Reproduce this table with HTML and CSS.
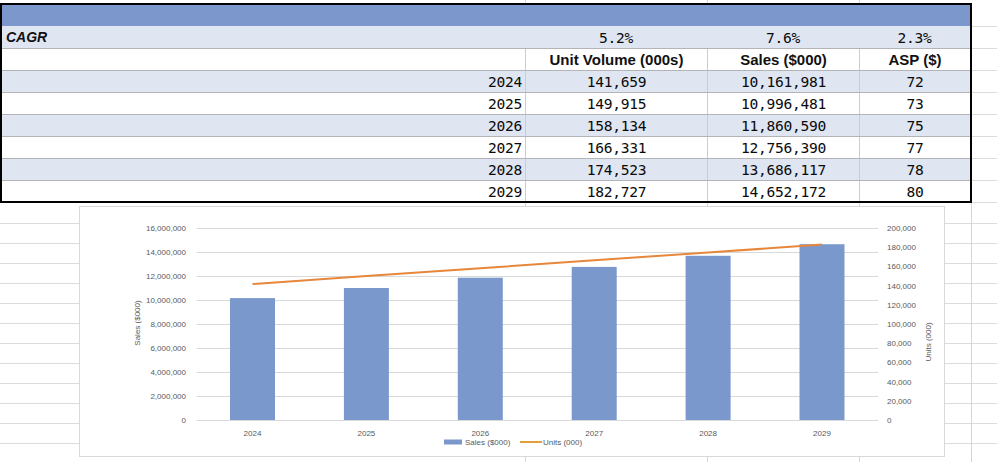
FILE: index.html
```html
<!DOCTYPE html>
<html>
<head>
<meta charset="utf-8">
<title>CAGR</title>
<link rel="stylesheet" href="styles.css">
</head>
<body>
<div class="sheet">
  <section class="top">
    <div class="xtable">
      <div class="row band"></div>
      <div class="row cagr alt">
        <div class="cell label">CAGR</div>
        <div class="cell num">5.2%</div>
        <div class="cell num">7.6%</div>
        <div class="cell num">2.3%</div>
      </div>
      <div class="row lined">
        <div class="cell"></div>
        <div class="cell head">Unit Volume (000s)</div>
        <div class="cell head">Sales ($000)</div>
        <div class="cell head">ASP ($)</div>
      </div>
      <div class="row lined alt">
        <div class="cell num year">2024</div>
        <div class="cell num">141,659</div>
        <div class="cell num">10,161,981</div>
        <div class="cell num">72</div>
      </div>
      <div class="row lined">
        <div class="cell num year">2025</div>
        <div class="cell num">149,915</div>
        <div class="cell num">10,996,481</div>
        <div class="cell num">73</div>
      </div>
      <div class="row lined alt">
        <div class="cell num year">2026</div>
        <div class="cell num">158,134</div>
        <div class="cell num">11,860,590</div>
        <div class="cell num">75</div>
      </div>
      <div class="row lined">
        <div class="cell num year">2027</div>
        <div class="cell num">166,331</div>
        <div class="cell num">12,756,390</div>
        <div class="cell num">77</div>
      </div>
      <div class="row lined alt">
        <div class="cell num year">2028</div>
        <div class="cell num">174,523</div>
        <div class="cell num">13,686,117</div>
        <div class="cell num">78</div>
      </div>
      <div class="row lined last">
        <div class="cell num year">2029</div>
        <div class="cell num">182,727</div>
        <div class="cell num">14,652,172</div>
        <div class="cell num">80</div>
      </div>
    </div>
  </section>
  <section class="bottom">
    <div class="chart">
      <svg class="plot" width="864" height="249" viewBox="80 207 864 249" xmlns="http://www.w3.org/2000/svg">
        <g class="grid">
          <line x1="197" x2="878" y1="228.5" y2="228.5"/>
          <line x1="197" x2="878" y1="252.5" y2="252.5"/>
          <line x1="197" x2="878" y1="276.5" y2="276.5"/>
          <line x1="197" x2="878" y1="300.5" y2="300.5"/>
          <line x1="197" x2="878" y1="324.5" y2="324.5"/>
          <line x1="197" x2="878" y1="348.5" y2="348.5"/>
          <line x1="197" x2="878" y1="372.5" y2="372.5"/>
          <line x1="197" x2="878" y1="396.5" y2="396.5"/>
          <line x1="197" x2="878" y1="420.5" y2="420.5"/>
        </g>
        <g class="ylab left">
          <text x="186" y="231">16,000,000</text>
          <text x="186" y="255">14,000,000</text>
          <text x="186" y="279">12,000,000</text>
          <text x="186" y="303">10,000,000</text>
          <text x="186" y="327">8,000,000</text>
          <text x="186" y="351">6,000,000</text>
          <text x="186" y="375">4,000,000</text>
          <text x="186" y="399">2,000,000</text>
          <text x="186" y="423">0</text>
        </g>
        <g class="ylab right">
          <text x="887" y="231">200,000</text>
          <text x="887" y="250.2">180,000</text>
          <text x="887" y="269.4">160,000</text>
          <text x="887" y="288.6">140,000</text>
          <text x="887" y="307.8">120,000</text>
          <text x="887" y="327">100,000</text>
          <text x="887" y="346.2">80,000</text>
          <text x="887" y="365.4">60,000</text>
          <text x="887" y="384.6">40,000</text>
          <text x="887" y="403.8">20,000</text>
          <text x="887" y="423">0</text>
        </g>
        <text class="atitle" transform="translate(140 323) rotate(-90)">Sales ($000)</text>
        <text class="atitle" transform="translate(931 342) rotate(-90)">Units (000)</text>
        <g class="bars">
          <rect x="230" y="298.1" width="45" height="121.9"/>
          <rect x="343.9" y="288" width="45" height="132"/>
          <rect x="457.8" y="277.7" width="45" height="142.3"/>
          <rect x="571.7" y="266.9" width="45" height="153.1"/>
          <rect x="685.6" y="255.8" width="45" height="164.2"/>
          <rect x="799.5" y="244.2" width="45" height="175.8"/>
        </g>
        <polyline class="units" points="252.5,284 366.4,276.1 480.3,268.2 594.2,260.3 708.1,252.5 822,244.6"/>
        <g class="xlab">
          <text x="252.5" y="436">2024</text>
          <text x="366.4" y="436">2025</text>
          <text x="480.3" y="436">2026</text>
          <text x="594.2" y="436">2027</text>
          <text x="708.1" y="436">2028</text>
          <text x="822" y="436">2029</text>
        </g>
        <g class="legend">
          <rect x="444" y="439.5" width="18" height="5"/>
          <text x="465" y="445">Sales ($000)</text>
          <line x1="520" x2="542" y1="442" y2="442"/>
          <text x="543" y="445">Units (000)</text>
        </g>
      </svg>
    </div>
  </section>
</div>
</body>
</html>
```

FILE: styles.css
```css
body {
  margin: 0;
  background: #ffffff;
}

.sheet {
  width: 997px;
  height: 462px;
  overflow: hidden;
}

.top {
  height: 203px;
  box-sizing: border-box;
  padding-top: 3px;
  background:
    linear-gradient(#d6d6d6, #d6d6d6) 525px 0 / 1px 100% no-repeat,
    linear-gradient(#d6d6d6, #d6d6d6) 707px 0 / 1px 100% no-repeat,
    linear-gradient(#d6d6d6, #d6d6d6) 859px 0 / 1px 100% no-repeat,
    repeating-linear-gradient(to bottom, transparent 0 21px, #dcdcdc 21px 22px) 0 5px;
}

.xtable {
  width: 972px;
  box-sizing: border-box;
  border: 2px solid #000;
  background: #fff;
}

.row {
  display: grid;
  grid-template-columns: 523px 182px 152px 111px;
  height: 22px;
  box-sizing: border-box;
  border-bottom: 1px solid #b2b4b8;
}

.band {
  height: 21px;
  background: #7b97cc;
  border-bottom: none;
}

.cagr {
  height: 23px;
}

.alt {
  background: #dfe6f2;
}

.last {
  height: 20px;
  border-bottom: none;
}

.lined .cell + .cell {
  border-left: 1px solid #cdcdcd;
}

.cell {
  display: flex;
  align-items: center;
  justify-content: center;
  box-sizing: border-box;
  color: #111;
}

.num {
  font-family: "DejaVu Sans Mono", "Liberation Mono", monospace;
  font-size: 14.6px;
  letter-spacing: -0.3px;
  color: #0a0a0a;
}

.year {
  justify-content: flex-end;
  padding-right: 3px;
}

.label {
  justify-content: flex-start;
  padding-left: 4px;
  font-family: "Liberation Sans", Arial, sans-serif;
  font-weight: bold;
  font-style: italic;
  font-size: 14px;
}

.head {
  font-family: "Liberation Sans", Arial, sans-serif;
  font-weight: bold;
  font-size: 15px;
}

.bottom {
  height: 259px;
  box-sizing: border-box;
  padding: 3px 0 0 79px;
  background:
    linear-gradient(#d6d6d6, #d6d6d6) 525px 0 / 1px 100% no-repeat,
    linear-gradient(#d6d6d6, #d6d6d6) 707px 0 / 1px 100% no-repeat,
    linear-gradient(#d6d6d6, #d6d6d6) 859px 0 / 1px 100% no-repeat,
    linear-gradient(#d6d6d6, #d6d6d6) 971px 0 / 1px 100% no-repeat,
    repeating-linear-gradient(to bottom, transparent 0 19px, #dcdcdc 19px 20px) 0 1px;
}

.chart {
  width: 866px;
  height: 251px;
  box-sizing: border-box;
  border: 1px solid #d9d9d9;
  background: #fff;
}

.plot {
  display: block;
  font-family: "Liberation Sans", Arial, sans-serif;
  font-size: 8px;
}

.grid line {
  stroke: #d9d9d9;
  stroke-width: 1;
}

.ylab text,
.xlab text,
.legend text,
.atitle {
  fill: #595959;
}

.ylab.left text {
  text-anchor: end;
}

.ylab.right text {
  text-anchor: start;
}

.atitle {
  text-anchor: middle;
}

.xlab text {
  text-anchor: middle;
}

.bars rect,
.legend rect {
  fill: #7b98cd;
}

.units {
  fill: none;
  stroke: #e6873b;
  stroke-width: 2;
  stroke-linejoin: round;
}

.legend line {
  stroke: #e1a03a;
  stroke-width: 2;
}
```
